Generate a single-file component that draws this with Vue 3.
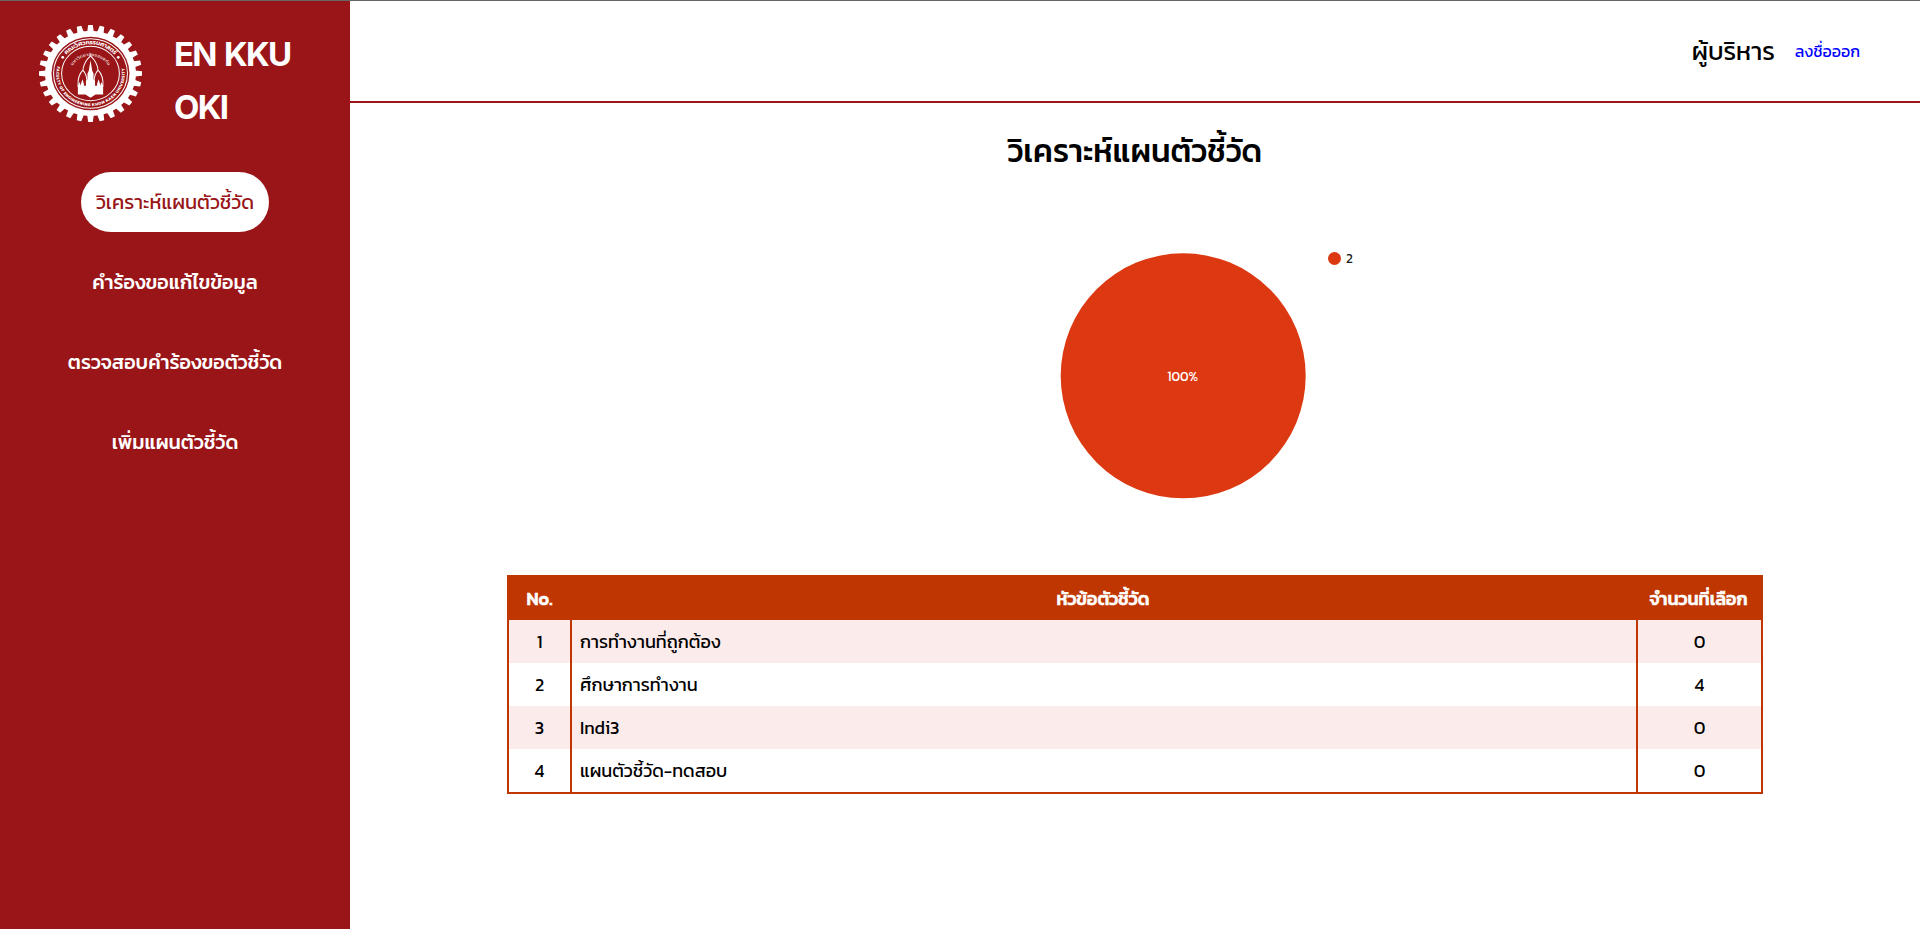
<script setup>
const menu = [
  { label: 'วิเคราะห์แผนตัวชี้วัด', active: true },
  { label: 'คำร้องขอแก้ไขข้อมูล' },
  { label: 'ตรวจสอบคำร้องขอตัวชี้วัด' },
  { label: 'เพิ่มแผนตัวชี้วัด' },
]
const rows = [
  { name: 'การทำงานที่ถูกต้อง', count: 0 },
  { name: 'ศึกษาการทำงาน', count: 4 },
  { name: 'Indi3', count: 0 },
  { name: 'แผนตัวชี้วัด-ทดสอบ', count: 0 },
]
const teeth = Array.from({ length: 28 }, (_, i) => (i * 360) / 28)
</script>

<template>
  <div class="page">
    <aside class="sidebar">
      <div class="brand">
        <svg class="logo" viewBox="-51 -51 102 102" preserveAspectRatio="none">
          <defs>
            <path id="arcTop" d="M-30.8 0A30.8 30.8 0 0 1 30.8 0" />
            <path id="arcMid" d="M-20.500 2A20.500 20.500 0 0 1 20.500 2" />
            <path id="arcBottom" d="M-33 -7.500A33.9 33.9 0 1 0 33 -7.500" />
          </defs>
          <g fill="#fff">
            <path v-for="a in teeth" :key="a" d="M-3.200 -44L-2.300 -51H2.300L3.200 -44Z" :transform="`rotate(${a})`" />
            <circle r="45" />
          </g>
          <circle r="38.600" fill="#991518" />
          <circle r="36.600" fill="none" stroke="#fff" stroke-width="1" />
          <circle r="28.600" fill="none" stroke="#fff" stroke-width="1" />
          <g fill="#fff">
            <text font-size="6.500" font-weight="600" text-anchor="middle"><textPath href="#arcTop" startOffset="50%" textLength="54">คณะวิศวกรรมศาสตร์</textPath></text>
            <text font-size="4.500" text-anchor="middle"><textPath href="#arcMid" startOffset="50%" textLength="42">มหาวิทยาลัยขอนแก่น</textPath></text>
            <text font-size="4.400" font-weight="700"><textPath href="#arcBottom" textLength="120">FACULTY OF ENGINEERING KHON KAEN UNIVERSITY</textPath></text>
            <circle cx="-27.500" cy="-17" r="1.400" />
            <circle cx="27.500" cy="-17" r="1.400" />
            <path d="M-12.500 22V13L-11 9L-9.500 13V11L-8 6L-6.500 11V13H-4.500V8L-3 6V0L-1.700 -3L0 -14L1.700 -3L3 0V6L4.500 8V13H6.500V11L8 6L9.500 11V13L11 9L12.500 13V22H5L0 25.500L-5 22Z" />
          </g>
          <path d="M-12.300 14C-13 4 -11 0 -7.500 -3.500C-4.500 0 -3.500 4 -3.500 9M12.300 14C13 4 11 0 7.500 -3.500C4.500 0 3.500 4 3.500 9M-7.500 -3.500C-7 -10 -3.500 -15 0 -18.500C3.500 -15 7 -10 7.500 -3.500" fill="none" stroke="#fff" stroke-width="1" />
        </svg>
        <h1 class="brand-name">EN KKU<br />OKI</h1>
      </div>
      <nav class="menu">
        <a v-for="m in menu" :key="m.label" class="item" :class="{ active: m.active }">{{ m.label }}</a>
      </nav>
    </aside>
    <main class="main">
      <header class="topbar">
        <span class="user">ผู้บริหาร</span>
        <a class="logout">ลงชื่อออก</a>
      </header>
      <h2 class="title">วิเคราะห์แผนตัวชี้วัด</h2>
      <svg class="chart" width="320" height="250">
        <circle cx="133.200" cy="124.800" r="122.500" fill="#dc3912" />
        <text x="117.200" y="130" font-size="14.500" textLength="31" lengthAdjust="spacingAndGlyphs" fill="#fff">100%</text>
        <circle cx="284.500" cy="7.500" r="6.500" fill="#dc3912" />
        <text x="296" y="12" font-size="13.500" textLength="6.800" lengthAdjust="spacingAndGlyphs" fill="#222">2</text>
      </svg>
      <table class="table">
        <thead>
          <tr>
            <th class="no">No.</th>
            <th>หัวข้อตัวชี้วัด</th>
            <th class="count">จำนวนที่เลือก</th>
          </tr>
        </thead>
        <tbody>
          <tr v-for="(r, i) in rows" :key="i">
            <td>{{ i + 1 }}</td>
            <td class="name">{{ r.name }}</td>
            <td>{{ r.count }}</td>
          </tr>
        </tbody>
      </table>
    </main>
  </div>
</template>

<style>
body { margin: 0; background: #fff; }
</style>

<style scoped>
* { box-sizing: border-box; }
.page { display: flex; height: 929px; border-top: 1px solid #666; font-family: Kanit, Prompt, "Noto Sans Thai", "Noto Sans", sans-serif; color: #000; overflow: hidden; }
.sidebar { width: 350px; background: #991518; color: #fff; flex: none; }
.brand { height: 171px; display: flex; padding: 24px 0 0 39px; }
.logo { width: 103px; height: 97px; flex: none; }
.brand-name { margin: 3px 0 0 32px; font: 700 33px/53px Inter, sans-serif; letter-spacing: -1.7px; word-spacing: 2px; white-space: nowrap; }
.menu { display: flex; flex-direction: column; align-items: center; gap: 20px; }
.item { height: 60px; width: 188px; display: flex; align-items: center; justify-content: center; font-size: 19.9px; font-weight: 500; white-space: nowrap; }
.item.active { background: #fff; color: #991518; border-radius: 30px; font-weight: 400; }
.main { flex: 1; display: flex; flex-direction: column; }
.topbar { height: 102px; border-bottom: 2px solid #991518; display: flex; align-items: center; justify-content: flex-end; gap: 20px; padding-right: 60px; }
.user { font-size: 25px; }
.logout { font-size: 16px; color: #00f; }
.title { margin: 24px 0 0; height: 48px; line-height: 48px; font-size: 31.7px; font-weight: 500; text-align: center; }
.chart { margin: 76px 0 74px 700px; flex: none; overflow: visible; }
.table { width: 1256px; margin-left: 157px; border-collapse: separate; border-spacing: 0; table-layout: fixed; border: 2px solid #bf3600; font-size: 18px; }
th { height: 43px; background: #bf3600; color: #fff; padding: 0; font-weight: 500; -webkit-text-stroke: .6px #fff; }
td { height: 43px; border-left: 2px solid #bf3600; text-align: center; padding: 0; }
td:first-child { border-left: 0; }
.no { width: 61px; }
.count { width: 125px; }
.name { text-align: left; padding-left: 8px; }
tbody tr:nth-child(odd) { background: #fcebeb; }
</style>
